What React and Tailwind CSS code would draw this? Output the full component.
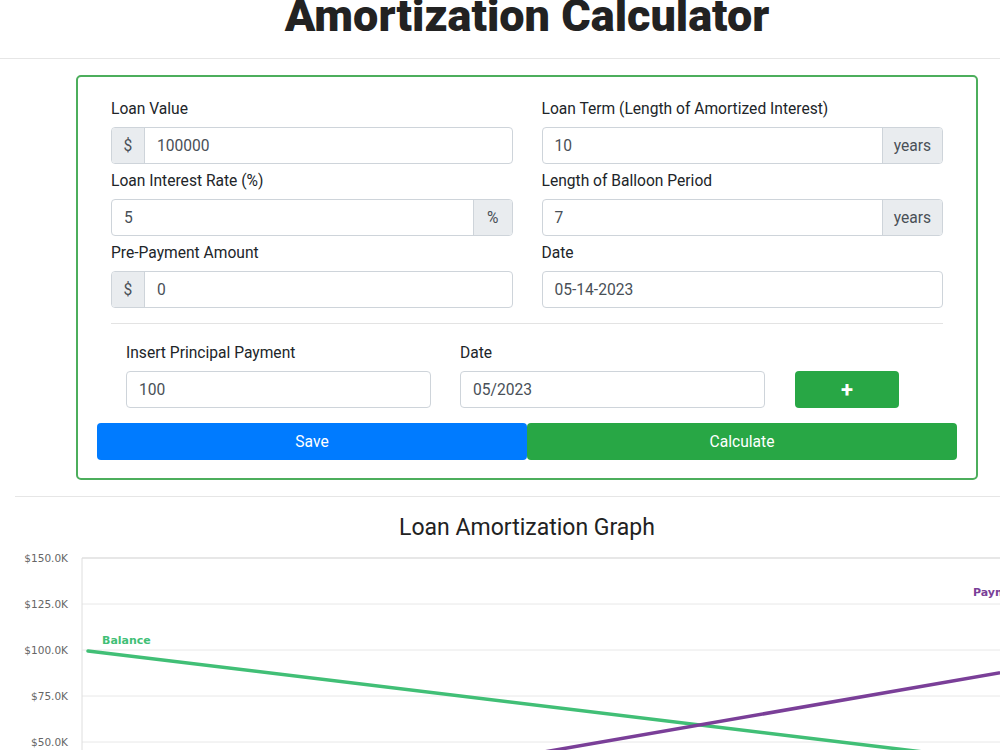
import React from 'react';

const font = { fontFamily: 'Roboto, "Noto Sans", sans-serif' };

const Field = ({ label, value, prefix, suffix }) => {
    return (
        <div>
            <div className="text-[15.6px] leading-[24px] h-[24px] mb-[7px] pt-[1px] text-[#212529]">{label}</div>
            <div className="flex h-[37px] border border-[#ced4da] rounded-[4px] overflow-hidden text-[15.6px] text-[#495057]">
                {prefix && (
                    <div className="w-[33px] bg-[#e9ecef] border-r border-[#ced4da] flex items-center justify-center pt-[2px]">{prefix}</div>
                )}
                <div className="flex-1 flex items-center px-[12px] pt-[2px]">{value}</div>
                {suffix && (
                    <div className={`bg-[#e9ecef] border-l border-[#ced4da] flex items-center pt-[2px] ${suffix === '%' ? 'px-[13px]' : 'px-[11px]'}`}>{suffix}</div>
                )}
            </div>
        </div>
    );
};

const Chart = () => {
    const grid = [
        { y: 558, label: '$150.0K' },
        { y: 604, label: '$125.0K' },
        { y: 650, label: '$100.0K' },
        { y: 696, label: '$75.0K' },
        { y: 742, label: '$50.0K' },
    ];
    return (
        <svg width="1024" height="206" viewBox="15 544 1024 206" className="block">
            {grid.map((g, i) => (
                <g key={g.label}>
                    <line x1="82" x2="1039" y1={g.y} y2={g.y} stroke={i === 0 ? '#cfcfcf' : '#e8e8e8'} strokeWidth="1" />
                    <text x="68" y={g.y + 4} textAnchor="end" fontSize="10.5" fill="#666" fontFamily="Verdana, 'DejaVu Sans', sans-serif">{g.label}</text>
                </g>
            ))}
            <line x1="82" x2="82" y1="558" y2="750" stroke="#dedede" strokeWidth="1" />
            {/* balance */}
            <line x1="88" y1="651" x2="1039" y2="766" stroke="#41bf76" strokeWidth="3.5" strokeLinecap="round" />
            <text x="102" y="644" fontSize="11" fontWeight="bold" fill="#41bf76" fontFamily="Verdana, 'DejaVu Sans', sans-serif">Balance</text>
            {/* payments */}
            <line x1="400" y1="777" x2="1039" y2="666" stroke="#7a3f98" strokeWidth="3.5" strokeLinecap="round" />
            <text x="973" y="596" fontSize="11" fontWeight="bold" fill="#7a3f98" fontFamily="Verdana, 'DejaVu Sans', sans-serif">Payments</text>
        </svg>
    );
};

const App = () => {
    return (
        <div className="w-screen h-screen overflow-hidden bg-white" style={font}>
            <div className="w-[1054px]">
                <h1 className="text-center text-[45px] leading-none font-black text-[#222] -mt-[7px]" style={{ fontFamily: 'Roboto, "Liberation Sans", sans-serif' }}>
                    Amortization Calculator
                </h1>
                <div className="mt-[20px] border-t border-[#e6e6e6]"></div>

                <div className="mx-auto w-[902px] mt-[16px] border-2 border-[#4cae5c] rounded-[5px] px-[19px] pt-[19px] pb-[18px]">
                    <div className="px-[14px] grid grid-cols-2 gap-x-[29px] gap-y-[4px]">
                        <Field label="Loan Value" value="100000" prefix="$" />
                        <Field label="Loan Term (Length of Amortized Interest)" value="10" suffix="years" />
                        <Field label="Loan Interest Rate (%)" value="5" suffix="%" />
                        <Field label="Length of Balloon Period" value="7" suffix="years" />
                        <Field label="Pre-Payment Amount" value="0" prefix="$" />
                        <Field label="Date" value="05-14-2023" />
                    </div>
                    <div className="mx-[14px] mt-[15px] border-t border-[#e3e3e3]"></div>

                    <div className="flex items-end pl-[29px] mt-[16px]">
                        <div className="w-[305px]">
                            <Field label="Insert Principal Payment" value="100" />
                        </div>
                        <div className="w-[305px] ml-[29px]">
                            <Field label="Date" value="05/2023" />
                        </div>
                        <button className="ml-[30px] w-[104px] h-[37px] rounded-[4px] bg-[#28a745] text-white text-[22px] font-bold leading-none flex items-center justify-center">
                            +
                        </button>
                    </div>

                    <div className="flex mt-[15px]">
                        <button className="flex-1 h-[37px] rounded-[4px] bg-[#007bff] text-white text-[15.6px] pt-[2px]">Save</button>
                        <button className="flex-1 h-[37px] rounded-[4px] bg-[#28a745] text-white text-[15.6px] pt-[2px]">Calculate</button>
                    </div>
                </div>

                <div className="px-[15px]">
                    <div className="mt-[16px] border-t border-[#e6e6e6]"></div>
                    <h2 className="mt-[15px] text-center text-[23px] leading-[32px] text-[#222]">Loan Amortization Graph</h2>
                    <Chart />
                </div>
            </div>
        </div>
    );
};

export default App;
